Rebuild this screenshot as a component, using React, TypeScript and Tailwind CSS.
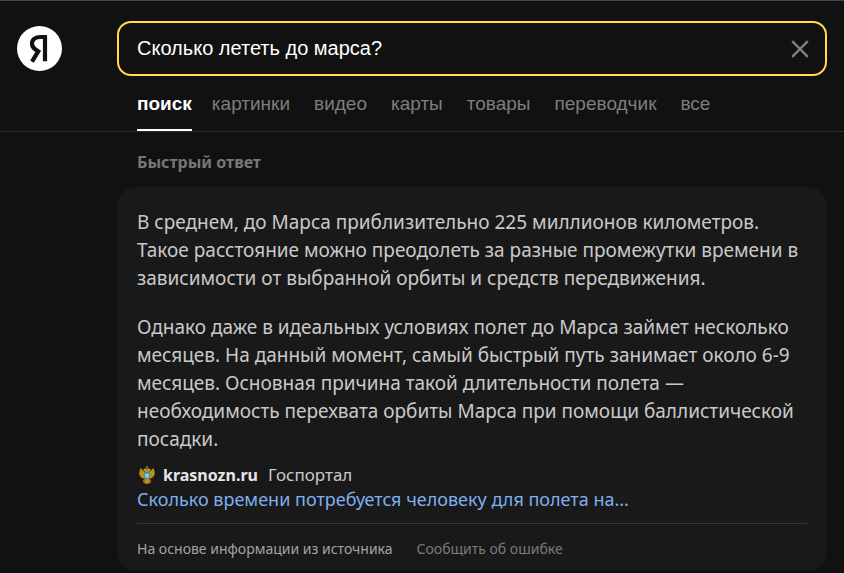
import React, { useState } from 'react';

interface Tab {
  label: string;
  active?: boolean;
}

const TABS: Tab[] = [
  { label: 'поиск', active: true },
  { label: 'картинки' },
  { label: 'видео' },
  { label: 'карты' },
  { label: 'товары' },
  { label: 'переводчик' },
  { label: 'все' },
];

const Logo: React.FC = () => (
  <a href="#" aria-label="Яндекс" className="block shrink-0">
    <svg viewBox="0 0 45 45" className="size-[45px]">
      <circle cx="22.5" cy="22.5" r="22.5" fill="#fff" />
      <path
        d="M28 35.200V11H23.500C18 11 15 13.800 15 17.800C15 21.200 17 22.800 21.200 25.400L15 35.600"
        fill="none"
        stroke="#111"
        strokeWidth="4.2"
      />
    </svg>
  </a>
);

const SearchBox: React.FC = () => {
  const [query, setQuery] = useState('Сколько лететь до марса?');
  return (
    <form
      className="flex h-[55px] items-center rounded-[14px] border-2 border-[#ffdb4d] pr-4 pl-[18px]"
      onSubmit={(e) => e.preventDefault()}
    >
      <input
        type="text"
        aria-label="Запрос"
        value={query}
        onChange={(e) => setQuery(e.target.value)}
        className="min-w-0 flex-1 bg-transparent pb-0.5 text-[20px] leading-6 text-white outline-none"
      />
      <button type="button" aria-label="Очистить" onClick={() => setQuery('')} className="text-[#808080]">
        <svg viewBox="0 0 18 18" className="size-[18px]" fill="none" stroke="currentColor" strokeWidth="2.4">
          <path d="M1.2 1.2l15.6 15.6M16.8 1.2L1.2 16.8" />
        </svg>
      </button>
    </form>
  );
};

const Emblem: React.FC = () => (
  <svg viewBox="0 0 20 20" className="size-5 shrink-0" aria-hidden="true">
    <path d="M8.3 7.4C6.6 6.4 4.6 4.6 3.9 3C2.6 5 1.9 8 2.6 10.2C3.4 12.2 5.6 13.6 8 13.6zM11.7 7.4C13.4 6.4 15.4 4.6 16.1 3C17.4 5 18.1 8 17.4 10.2C16.6 12.2 14.4 13.6 12 13.6z" fill="#c6a216" />
    <path d="M3.8 6l3.6 5.4M2.9 9l3.6 3.4M16.2 6l-3.6 5.4M17.1 9l-3.6 3.4" stroke="#6b5710" strokeWidth=".5" />
    <path d="M9.2 1.2h1.6v2.2H9.2zM5.9 4.4L8.6 3.2L10 4.6L11.4 3.2L14.1 4.4L12 7H8z" fill="#b5971b" />
    <path d="M8 13h4l1 5L10 19L7 18z" fill="#b8941a" />
    <path d="M6 15l2-1v2.500l-2 1.200zM14 15l-2-1v2.500l2 1.200z" fill="#8c721b" />
    <path d="M7.2 6.8h5.6v5.2L10 15l-2.8-3z" fill="#3c8fb8" />
    <path d="M8.2 8.8h3.6v2.8L10 13.3l-1.8-1.7z" fill="#a9cbd6" />
  </svg>
);

const AnswerCard: React.FC = () => (
  <article className="rounded-[20px] bg-[#19191a] px-5 pt-[21px] pb-3">
    <div className="space-y-[21px] text-[19px] leading-7 text-[#c9c9c9]">
      <p>
        В среднем, до Марса приблизительно 225 миллионов километров.{' '}
        <br />
        Такое расстояние можно преодолеть за разные промежутки времени в{' '}
        <br />
        зависимости от выбранной орбиты и средств передвижения.
      </p>
      <p>
        Однако даже в идеальных условиях полет до Марса займет несколько{' '}
        <br />
        месяцев. На данный момент, самый быстрый путь занимает около 6-9{' '}
        <br />
        месяцев. Основная причина такой длительности полета —{' '}
        <br />
        необходимость перехвата орбиты Марса при помощи баллистической{' '}
        <br />
        посадки.
      </p>
    </div>
    <div className="mt-[10px] flex items-center text-[17px] leading-6">
      <Emblem />
      <a href="#" className="ml-1.5 text-[16px] font-bold text-[#e6e6e6]">krasnozn.ru</a>
      <span className="ml-2.5 text-[#c9c9c9]">Госпортал</span>
    </div>
    <a href="#" className="block truncate text-[18px] leading-6 text-[#7fb0ee]">
      Сколько времени потребуется человеку для полета на...
    </a>
    <footer className="mt-3 flex gap-6 border-t border-[#363637] pt-[15px] text-[14px] leading-5">
      <span className="text-[#a3a3a3]">На основе информации из источника</span>
      <a href="#" className="text-[#7a7a7a]">Сообщить об ошибке</a>
    </footer>
  </article>
);

const App: React.FC = () => {
  return (
    <div className="min-h-screen border-t border-[#45454f] bg-[#111112] font-['Liberation_Sans',Arial,sans-serif]">
      <header className="flex gap-[55px] border-b border-[#2d2d2e] px-[17px] pt-5">
        <div className="pt-[5px]">
          <Logo />
        </div>
        <div className="min-w-0 flex-1">
          <SearchBox />
          <nav className="ml-5 flex gap-6 pt-[14px] text-[19px] leading-7">
            {TABS.map((tab) => (
              <a
                key={tab.label}
                href="#"
                aria-current={tab.active ? 'page' : undefined}
                className={
                  tab.active
                    ? '-mr-1 border-b-2 border-white pb-[11px] font-bold text-white'
                    : 'border-b-2 border-transparent pb-[11px] text-[#7e7e7f]'
                }
              >
                {tab.label}
              </a>
            ))}
          </nav>
        </div>
      </header>
      <main className="pr-[17px] pl-[117px] font-['Noto_Sans','Open_Sans',sans-serif]">
        <h2 className="px-5 pt-[18px] pb-[13px] text-[16px] leading-6 font-bold text-[#777778]">Быстрый ответ</h2>
        <AnswerCard />
      </main>
    </div>
  );
};

export default App;
